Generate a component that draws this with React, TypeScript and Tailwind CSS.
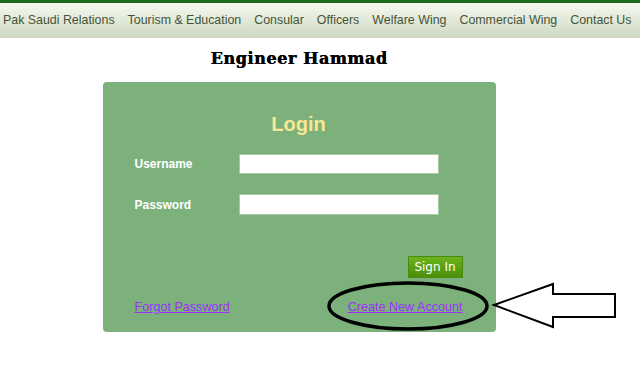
function NavBar() {
  const items = [
    "Pak Saudi Relations",
    "Tourism & Education",
    "Consular",
    "Officers",
    "Welfare Wing",
    "Commercial Wing",
    "Contact Us",
  ];
  return (
    <nav className="h-[38px] border-t-[3px] border-[#1e6a1a] bg-gradient-to-b from-[#f7f9f1] to-[#ccd8bf] flex items-center gap-[13px] px-[3px]">
      {items.map((item) => (
        <a key={item} className="text-[12.4px] text-[#44543a] whitespace-nowrap">
          {item}
        </a>
      ))}
    </nav>
  );
}

function Annotation() {
  return (
    <svg className="absolute left-0 top-0 pointer-events-none" width="640" height="373">
      <ellipse cx="408" cy="306" rx="79" ry="23" fill="none" stroke="#000" strokeWidth="3.5" />
      <polygon
        points="494,305 553,284 553,294 615,294 615,317 553,317 553,327"
        fill="#fff"
        stroke="#000"
        strokeWidth="2"
        strokeLinejoin="miter"
      />
    </svg>
  );
}

function LoginCard() {
  return (
    <div className="w-[393px] h-[250px] bg-[#7cb17c] rounded-[4px] pt-[30px] pl-[32px] pr-[33px] flex flex-col">
      <h2 className="text-center text-[20px] leading-[24px] font-bold text-[#f8e792]">Login</h2>

      <div className="mt-[18px] flex flex-col gap-[20px]">
        <div className="flex items-center h-[20px]">
          <span className="w-[104px] text-[12px] font-bold text-white">Username</span>
          <input className="w-[200px] h-[20px] bg-white border border-[#a9c9a9] outline-none" />
        </div>
        <div className="flex items-center h-[21px]">
          <span className="w-[104px] text-[12px] font-bold text-white">Password</span>
          <input type="password" className="w-[200px] h-[21px] bg-white border border-[#a9c9a9] outline-none" />
        </div>
      </div>

      <div className="mt-[41px] flex justify-end">
        <button className="w-[55px] h-[22px] bg-gradient-to-b from-[#6cb41c] to-[#4a8f08] text-white text-[12px] font-['DejaVu_Sans',sans-serif] border border-[#4b8a12]">
          Sign In
        </button>
      </div>

      <div className="mt-[21px] flex justify-between text-[12.6px] leading-[16px]">
        <a className="text-[#9b30ff] underline">Forgot Password</a>
        <a className="text-[#9b30ff] underline">Create New Account</a>
      </div>
    </div>
  );
}

export default function App() {
  return (
    <div className="relative w-[640px] h-[373px] bg-white font-['Liberation_Sans',Arial,sans-serif] overflow-hidden">
      <NavBar />
      <div className="w-[598px] flex flex-col items-center">
        <h1 className="mt-[11px] text-[16px] leading-[20px] font-black text-black tracking-[0.6px] font-['DejaVu_Serif',serif] [text-shadow:0.5px_0_0_#000]">
          Engineer Hammad
        </h1>
        <div className="mt-[13px]">
          <LoginCard />
        </div>
      </div>
      <Annotation />
    </div>
  );
}
